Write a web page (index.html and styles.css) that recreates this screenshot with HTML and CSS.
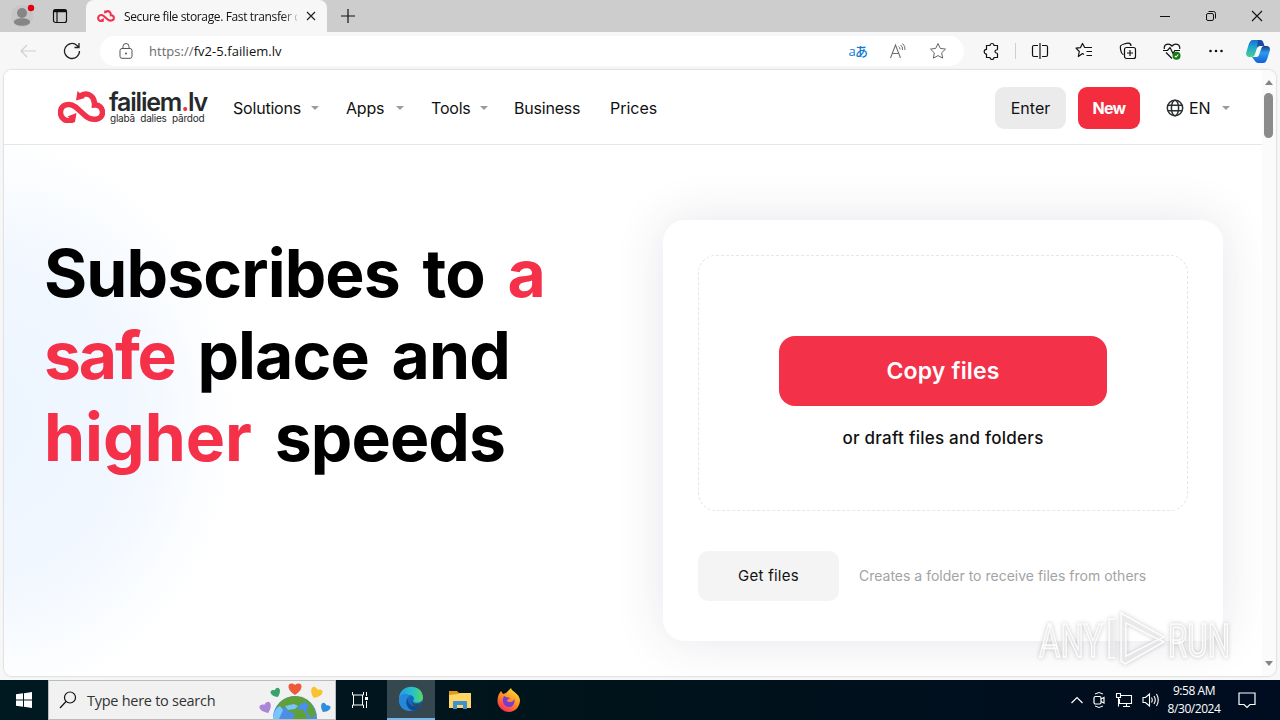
FILE: index.html
```
<!DOCTYPE html>
<html lang="en">
<head>
    <meta charset="UTF-8">
    <meta name="viewport" content="width=device-width, initial-scale=1.0">
    <title>Secure file storage. Fast transfer</title>
    <link rel="stylesheet" href="styles.css">
</head>
<body>
    <div class="tabs">
        <div class="perfil">
            <svg width="24" height="24" viewBox="0 0 24 24"><circle cx="11" cy="12" r="11" fill="#c6c6c6"/><circle cx="11" cy="9" r="5" fill="#868686"/><path d="M3 18c0-5 16-5 16 0 0 5-16 5-16 0z" fill="#868686"/><circle cx="20" cy="4" r="3.2" fill="#e0000f"/></svg>
        </div>
        <svg class="painel" width="16" height="16" viewBox="0 0 16 16"><rect x="1.500" y="1.500" width="13" height="13" rx="2" fill="none" stroke="#111" stroke-width="1.200"/><path d="M1.500 3h13" stroke="#111" stroke-width="2.500"/><path d="M5 4v10" stroke="#111" stroke-width="1.200"/></svg>
        <div class="tab">
            <svg width="18" height="12" viewBox="0 0 47 32"><use href="#nuvem"/></svg>
            <span class="tab-title">Secure file storage. Fast transfer c</span>
            <svg width="10" height="10" viewBox="0 0 10 10"><path d="M1 1l8 8M9 1l-8 8" stroke="#222" stroke-width="1.2"/></svg>
        </div>
        <svg class="mais" width="14" height="14" viewBox="0 0 14 14"><path d="M7 0v14M0 7h14" stroke="#111" stroke-width="1.2"/></svg>
        <div class="janela">
            <svg width="12" height="12" viewBox="0 0 12 12"><path d="M1 6.5h10" stroke="#111"/></svg>
            <svg width="12" height="12" viewBox="0 0 12 12"><rect x="1.5" y="3.5" width="7" height="7" rx="1.5" fill="none" stroke="#111"/><path d="M3.5 1.5h5a2 2 0 0 1 2 2v5" fill="none" stroke="#111"/></svg>
            <svg width="12" height="12" viewBox="0 0 12 12"><path d="M1 1l10 10M11 1L1 11" stroke="#111" stroke-width="1.1"/></svg>
        </div>
    </div>

    <div class="toolbar">
        <div class="icon"><svg width="18" height="18" viewBox="0 0 18 18"><path d="M17 9H2M8 3L2 9l6 6" fill="none" stroke="#cfcfcf" stroke-width="1.2"/></svg></div>
        <div class="icon"><svg width="18" height="18" viewBox="0 0 18 18"><path d="M16.5 9A7.5 7.5 0 1 1 14 3.4l2 1.8M16 1v4.5h-4.5" fill="none" stroke="#222" stroke-width="1.3"/></svg></div>
        <div class="url">
            <svg width="14" height="16" viewBox="0 0 14 16"><rect x="1" y="5.5" width="12" height="9.8" rx="2" fill="none" stroke="#555"/><path d="M4 5.500V3.500a3 3 0 0 1 6 0v2" fill="none" stroke="#555"/><circle cx="7" cy="10.500" r="1" fill="#555"/></svg>
            <span class="endereco"><i>https://</i>fv2-5.failiem.lv</span>
            <div class="mini traduzir">aあ</div>
            <div class="mini"><svg width="18" height="18" viewBox="0 0 18 18"><path d="M1.500 16L6.500 3l5 13M3.200 11.500h6.600" fill="none" stroke="#707070" stroke-width="1.100"/><path d="M9.500 4.500q1.700 1 1.500 3M11.500 3q2.500 1.500 2 5M13.500 1.500q3 2.500 2.500 6.500" fill="none" stroke="#707070"/></svg></div>
            <div class="mini"><svg width="18" height="18" viewBox="0 0 18 18"><path d="M9 1.500l2.300 4.900 5.200.7-3.800 3.700.9 5.300L9 13.600l-4.600 2.500.9-5.300L1.500 7.100l5.200-.7z" fill="none" stroke="#666" stroke-linejoin="round"/></svg></div>
        </div>
        <div class="icon"><svg width="18" height="18" viewBox="0 0 18 18"><path d="M3.500 3.500H7a2 2 0 0 1 4 0h3.500V7a1 1 0 0 1-1 1 1.500 1.500 0 0 0 0 3 1 1 0 0 1 1 1v3.500H11a2 2 0 0 1-4 0H3.500V12a2.300 2.300 0 0 1 0-4.600z" fill="none" stroke="#111" stroke-width="1.200" stroke-linejoin="round"/></svg></div>
        <div class="sep"></div>
        <div class="icon"><svg width="18" height="18" viewBox="0 0 18 18"><path d="M7 3.500H3a1.500 1.500 0 0 0-1.500 1.500v8A1.500 1.500 0 0 0 3 14.500h4M11 3.500h4A1.500 1.500 0 0 1 16.500 5v8a1.500 1.500 0 0 1-1.500 1.500h-4M9 1v16" fill="none" stroke="#111" stroke-width="1.200"/></svg></div>
        <div class="icon"><svg width="18" height="18" viewBox="0 0 18 18"><path d="M9 12.500l-1.500-.9-4.200 2.900 1-5L1 6.200l4.500-.6 2-4.100 2.200 4H17M11.500 9.500H17M11.500 13.500H17" fill="none" stroke="#111" stroke-width="1.200" stroke-linejoin="round"/></svg></div>
        <div class="icon"><svg width="18" height="18" viewBox="0 0 18 18"><path d="M4.500 12.500l-1-.5C2 11.500 1 5.500 1.500 4S8 1 9.500 1.200 12 3 12 4" fill="none" stroke="#111" stroke-width="1.200"/><rect x="5.500" y="5.500" width="11" height="11" rx="2" fill="#f7f7f7" stroke="#111" stroke-width="1.200"/><path d="M11 8v6M8 11h6" stroke="#111" stroke-width="1.200"/></svg></div>
        <div class="icon"><svg width="18" height="18" viewBox="0 0 18 18"><path d="M1.300 7C.5 2 6 .5 9 4c3-3.500 8.500-2 7.700 3M3 10.500l6 6M0 8.500h4.500L7 5.500l3 6 1.800-3H17" fill="none" stroke="#111" stroke-width="1.200"/><circle cx="13.500" cy="13.800" r="4" fill="#107c10"/><path d="M11.800 14l1.200 1 2.300-2.500" fill="none" stroke="#fff" stroke-width="1.100"/></svg></div>
        <div class="icon"><svg width="16" height="4" viewBox="0 0 16 4"><g fill="#111"><circle cx="2.500" cy="2" r="1.300"/><circle cx="8" cy="2" r="1.300"/><circle cx="13.500" cy="2" r="1.300"/></g></svg></div>
        <div class="icon copilot">
            <svg width="24" height="23" viewBox="0 0 24 23">
                <defs>
                    <linearGradient id="cp1" x1="0" y1="0" x2="0" y2="1"><stop offset="0" stop-color="#1d6fd0"/><stop offset=".45" stop-color="#20a8d0"/><stop offset="1" stop-color="#48cf8c"/></linearGradient>
                    <linearGradient id="cp2" x1="0" y1="0" x2="0" y2="1"><stop offset="0" stop-color="#183b8e"/><stop offset=".4" stop-color="#2a9ceb"/><stop offset="1" stop-color="#1460dc"/></linearGradient>
                </defs>
                <path d="M6 17l3 4c1 1.500 2 2 4 2h4c2.500 0 3.500-2 4.500-5L23.700 11c1-3-.5-5-3.200-5H18c-1.500 0-2.200 1-2.700 2.500L13 15c-.5 1.500-1.500 2-3 2z" fill="url(#cp2)"/>
                <path d="M18 6l-1.500-4C16 .5 15 0 13.500 0H7C4.500 0 3.500 2 2.500 5L.4 12c-1 3 .4 5 3 5H6c1.500 0 2.300-1 2.800-2.500L11 8c.5-1.500 1.500-2 3-2z" fill="url(#cp1)"/>
                <path d="M12 0h2c2 0 3 1 3.500 3l1 3h-4.500c-1.500 0-2.300.7-3 2z" fill="#1c4aa0"/>
            </svg>
        </div>
    </div>

    <div class="frame">
        <div class="site">
            <div class="header">
                <div class="logo">
                    <svg width="47" height="32" viewBox="0 0 47 32">
                        <g id="nuvem"><path d="M16 28.500c-8 3.500-14-1-13.500-8 .7-7 9-9 15-4.500l9 8c7 7 18 5 18-2.500 0-5-3.500-8-8-7.500C37 6 31 1.500 25 3.500l-4 2.500" fill="none" stroke="#f0324a" stroke-width="5.500"/><path d="M19.500 0l-1.500 9.500 9-2.500zM18.500 22l-1.500 9-7.500-5.500z" fill="#f0324a"/></g>
                    </svg>
                    <div class="marca">
                        <b>failiem<em>.</em>lv</b>
                        <small>glabā dalies pārdod</small>
                    </div>
                </div>
                <a class="menu solutions">Solutions<span class="caret"></span></a>
                <a class="menu apps">Apps<span class="caret"></span></a>
                <a class="menu tools">Tools<span class="caret"></span></a>
                <a class="menu business">Business</a>
                <a class="menu prices">Prices</a>
                <div class="acoes">
                    <button class="enter">Enter</button>
                    <button class="new">New</button>
                    <div class="lang">
                        <svg width="18" height="18" viewBox="0 0 18 18"><g fill="none" stroke="#2b3030" stroke-width="1.500"><circle cx="9" cy="9" r="7.700"/><ellipse cx="9" cy="9" rx="3.600" ry="7.700"/><path d="M2 6.300h14M2 11.700h14"/></g></svg>
                        <span>EN</span>
                        <span class="caret"></span>
                    </div>
                </div>
            </div>

            <div class="hero">
                <h1>Subscribes to <em class="safe">a<br>safe</em> place and<br><em class="higher">higher</em> speeds</h1>
                <div class="card">
                    <div class="drop">
                        <button class="copy">Copy files</button>
                        <p>or draft files and folders</p>
                    </div>
                    <div class="receber">
                        <button class="get">Get files</button>
                        <span>Creates a folder to receive files from others</span>
                    </div>
                </div>
            </div>
        </div>
        <div class="scroll">
            <span class="up"></span>
            <span class="thumb"></span>
            <span class="down"></span>
        </div>
    </div>

    <div class="taskbar">
        <div class="start"><svg width="16" height="16" viewBox="0 0 16 16"><path d="M0 2.300L7 1.300v6.200H0zM8 1.200L16 0v7.500H8zM0 8.500h7v6.200l-7-1zM8 8.500h8V16l-8-1.200z" fill="#fff"/></svg></div>
        <div class="busca">
            <svg width="18" height="18" viewBox="0 0 18 18"><circle cx="11" cy="6.500" r="5.500" fill="none" stroke="#111" stroke-width="1.200"/><path d="M7 10.500L1 17" stroke="#111" stroke-width="1.200"/></svg>
            <span>Type here to search</span>
            <svg class="globo" width="72" height="38" viewBox="0 0 72 38">
                <defs><path id="cor" d="M0 6C-11-1-6-9 0-4 6-9 11-1 0 6z"/></defs>
                <circle cx="36" cy="37" r="22" fill="#4b8fe8"/>
                <path d="M18 25q6-9 17-10l8 1 4 5-6 2-3 5 6 1 4 6v3H34l2-5-7-3-3-4-8 3zM42 15.500q13 5 15 18.500l-5 3-5-7 3-5z" fill="#5fa03a"/>
                <path d="M14 36q2-9 7-11l3 4-4 9h-6zM26 25l9-2 4 2-3 3-7 1z" fill="#79c4f8"/>
                <use href="#cor" x="36" y="8" fill="#f0583a"/>
                <use href="#cor" transform="translate(17 12) rotate(-25) scale(.75)" fill="#37a36a"/>
                <use href="#cor" transform="translate(57 12) rotate(25) scale(.9)" fill="#f9c22e"/>
                <use href="#cor" transform="translate(7 27) rotate(-25) scale(.9)" fill="#aa86d8"/>
                <use href="#cor" transform="translate(66 27) rotate(28) scale(.75)" fill="#2f8de0"/>
            </svg>
        </div>
        <div class="app"><svg width="18" height="18" viewBox="0 0 18 18"><path d="M1.500 1v3h11V1M1.500 17v-3h11v3M2.500 4v10M11.500 4v10M15.500 1v4M15.500 10v7" fill="none" stroke="#fff"/><path d="M14 6h3v3h-3z" fill="#fff"/></svg></div>
        <div class="app ativo">
            <svg width="26" height="26" viewBox="0 0 26 26">
                <defs><linearGradient id="ed1"><stop offset="0" stop-color="#249ce5"/><stop offset=".6" stop-color="#29c3c5"/><stop offset="1" stop-color="#5bd862"/></linearGradient></defs>
                <circle cx="13" cy="13" r="12" fill="#1667bd"/>
                <path d="M1 13C1-3 25-3 25 12c0 5-9 6-10 3 2-2 1-6-4-6-6 0-10 3-10 6z" fill="url(#ed1)"/>
                <path d="M1 13c1-5 8-7 11-3-6 2-5 11 2 15C5 26 0 19 1 13z" fill="#2589db"/>
                <path d="M10 13c-1 6 6 9 13 6-3 6-10 7-13 2-2-3-2-6 0-8z" fill="#104a91"/>
                <path d="M14.500 13c-1 3 0 5 3.500 5s5-1 6-2l1 1-2 2c-6 3-11-1-8.500-6z" fill="#35474f"/>
            </svg>
        </div>
        <div class="app"><svg width="22" height="20" viewBox="0 0 22 20"><path d="M0 1h8l2 2h11v3H0z" fill="#e39a1b"/><path d="M0 5l9-1 2-1h11v15H0z" fill="#ffd666"/><path d="M4 19v-7q0-1 1-1h12q1 0 1 1v7h-4v-4H8v4z" fill="#3d92d3"/></svg></div>
        <div class="app">
            <svg width="24" height="24" viewBox="0 0 24 24">
                <defs><linearGradient id="ff" x1=".8" y1="0" x2=".2" y2="1"><stop offset="0" stop-color="#ffe13b"/><stop offset=".5" stop-color="#ff8b22"/><stop offset="1" stop-color="#f5215f"/></linearGradient></defs>
                <path d="M2 6l2-3 2 3 3-1 5-5c0 3 8 5 9 12 0 7-5 12-11 12S.5 19 .5 13c0-3 .5-5 1.500-7z" fill="url(#ff)"/>
                <path d="M7 8c3 2 4 1 6 2l-3 2c-1 2 6 4 7-1 1 0 1 8-5 8-5 0-8-6-5-11z" fill="#7a3bd5"/>
            </svg>
        </div>
        <div class="tray">
            <svg width="12" height="8" viewBox="0 0 12 8"><path d="M.5 7L6 1.500 11.500 7" fill="none" stroke="#fff" stroke-width="1.200"/></svg>
            <svg width="14" height="18" viewBox="0 0 14 18"><path d="M3 3q4-3 8 0M3 15q4 3 8 0" fill="none" stroke="#fff"/><rect x="2" y="5.500" width="7" height="7.500" rx="1.500" fill="none" stroke="#fff" stroke-width="1.200"/><path d="M9 8l3-1.500v5.500l-3-1.500" fill="none" stroke="#fff" stroke-width="1.200"/></svg>
            <svg width="18" height="16" viewBox="0 0 18 16"><path d="M5.500 3.500h11v8h-12V7M8 14.500h7M11.500 11.500v3M1.500 1.500h4v4h-4zM3.500 5.500v9" fill="none" stroke="#fff" stroke-width="1.100"/></svg>
            <svg width="18" height="16" viewBox="0 0 18 16"><path d="M1 5.500h2.500L7.500 2v12l-4-3.500H1zM9.500 5.500q1.500 2.500 0 5M12 4q2.500 4 0 8M14.500 2q3.500 6 0 12" fill="none" stroke="#fff" stroke-width="1.100"/></svg>
        </div>
        <div class="relogio"><span class="hora">9:58 AM</span><span class="data">8/30/2024</span></div>
        <svg class="aviso" width="18" height="18" viewBox="0 0 18 18"><path d="M1 2h16v11.500h-5L9 16.500l-3-3H1z" fill="none" stroke="#fff" stroke-width="1.200"/></svg>
    </div>

    <svg class="anyrun" width="220" height="72" viewBox="0 0 220 72">
        <g class="traco">
            <text x="5" y="51" textLength="64" lengthAdjust="spacingAndGlyphs">ANY</text>
            <path d="M81 13h-6v39h6M87 7l43 24-5 3-33-17v33l33-17 5 3-39 22-4-3z"/>
            <text x="134" y="51" textLength="62" lengthAdjust="spacingAndGlyphs">RUN</text>
        </g>
    </svg>
</body>
</html>
```
FILE: styles.css
```
*{
    margin: 0;
    padding: 0;
    box-sizing: border-box;
}

body{
    width: 1280px;
    height: 720px;
    overflow: hidden;
    position: relative;
    background-color: #f7f7f7;
    font-family: "Open Sans", "Noto Sans CJK JP", sans-serif;
    color: #111;
}

svg{
    display: block;
    flex-shrink: 0;
}

em, i{
    font-style: normal;
}

button{
    border: none;
    font-family: Inter, sans-serif;
}

/* tabs */
.tabs{
    height: 32px;
    background-color: #cdcdcd;
    display: flex;
    align-items: center;
}

.perfil{
    margin-left: 11px;
    width: 24px;
}

.painel{
    margin: 0 18px 0 17px;
}

.tab{
    width: 241px;
    height: 32px;
    background-color: #f7f7f7;
    border-radius: 8px 8px 0 0;
    display: flex;
    align-items: center;
    padding-left: 11px;
}

.tab-title{
    width: 173px;
    margin: 0 9px 0 9px;
    font-size: 12px;
    letter-spacing: -0.37px;
    white-space: nowrap;
    overflow: hidden;
    -webkit-mask-image: linear-gradient(to right, #000 158px, transparent 177px);
}

.mais{
    margin-left: 14px;
}

.janela{
    margin-left: auto;
    margin-right: 17px;
    display: flex;
    gap: 34px;
}

/* toolbar */
.toolbar{
    height: 38px;
    display: flex;
    align-items: center;
    padding-left: 6px;
}

.icon{
    width: 44px;
    display: flex;
    justify-content: center;
}

.copilot{
    width: 40px;
}

.sep{
    width: 1px;
    height: 16px;
    margin: 0 2px 0 1px;
    background-color: #cfcfcf;
}

.url{
    width: 864px;
    height: 30px;
    margin: 0 6px;
    padding: 0 6px 0 19px;
    border-radius: 15px;
    background-color: #fff;
    display: flex;
    align-items: center;
}

.endereco{
    flex: 1;
    margin-left: 16px;
    font-size: 13px;
    letter-spacing: 0.04px;
}

.endereco i{
    color: #6b6b6b;
}

.mini{
    width: 40px;
    display: flex;
    justify-content: center;
}

.traduzir{
    color: #0b78d4;
    font-size: 13px;
    line-height: 16px;
    letter-spacing: -0.5px;
    font-weight: 500;
}

/* page */
.frame{
    height: 606px;
    margin: 0 4px;
    display: flex;
    background-color: #fff;
    border-radius: 8px;
    overflow: hidden;
    box-shadow: 0 0 2px rgba(0,0,0,0.3);
}

.site{
    width: 1258px;
    font-family: Inter, sans-serif;
    background: radial-gradient(ellipse 250px 285px at -15px 350px, #ecf5ff 0%, #f1f7ff 55%, #fff 100%);
}

.header{
    height: 75px;
    border-bottom: 1px solid #e6e6e6;
    background-color: #fff;
    display: flex;
    align-items: center;
    padding-left: 54px;
}

.logo{
    width: 175px;
    display: flex;
    align-items: center;
}

.marca{
    margin-left: 4px;
    margin-top: -2px;
    color: #26292c;
    display: flex;
    flex-direction: column;
}

.marca b{
    font-size: 25px;
    line-height: 24px;
    font-weight: 600;
    letter-spacing: -1.2px;
}

.marca b em{
    color: #f0324a;
}

.marca small{
    font-size: 10px;
    line-height: 9px;
    letter-spacing: -0.25px;
    word-spacing: 3px;
    padding-left: 1px;
}

.menu{
    font-size: 16px;
    letter-spacing: -0.2px;
    padding-top: 1px;
    display: flex;
    align-items: center;
    justify-content: space-between;
}

.prices{
    letter-spacing: 0;
}

.caret{
    border-left: 4px solid transparent;
    border-right: 4px solid transparent;
    border-top: 4px solid #9b9b9b;
}

.solutions{
    width: 86px;
    margin-right: 27px;
}

.apps{
    width: 58px;
    margin-right: 27px;
}

.tools{
    width: 57px;
    margin-right: 26px;
}

.business{
    width: 96px;
}

.acoes{
    margin-left: auto;
    margin-right: 33px;
    padding-top: 1px;
    display: flex;
    align-items: center;
}

.enter, .new{
    height: 42px;
    border-radius: 9px;
    font-size: 16px;
}

.enter{
    width: 71px;
    background-color: #ebebeb;
    color: #111;
}

.new{
    width: 62px;
    margin-left: 12px;
    background-color: #f32c3e;
    color: #fff;
    font-weight: 700;
    letter-spacing: -0.7px;
}

.lang{
    width: 64px;
    margin-left: 26px;
    margin-right: -1px;
    display: flex;
    align-items: center;
    font-size: 16px;
}

.lang span{
    margin-left: 5px;
}

.lang .caret{
    margin-left: auto;
}

.hero{
    display: flex;
    padding-left: 40px;
}

h1{
    width: 619px;
    padding-top: 87px;
    font-size: 66px;
    line-height: 82px;
    font-weight: 700;
    letter-spacing: -0.9px;
    word-spacing: 8px;
    color: #000;
    white-space: nowrap;
}

h1 em{
    color: #f43149;
}

.safe{
    letter-spacing: -2.2px;
}

.higher{
    letter-spacing: 0;
}

.card{
    width: 560px;
    height: 421px;
    margin-top: 75px;
    padding: 35px;
    border-radius: 22px;
    background-color: #fff;
    box-shadow: 0 0 50px rgba(40,50,80,0.12);
}

.drop{
    height: 256px;
    border: 1px dashed #e6e6e6;
    border-radius: 18px;
    padding-top: 80px;
    text-align: center;
}

.copy{
    width: 328px;
    height: 70px;
    border-radius: 16px;
    background-color: #f33148;
    color: #fff;
    font-size: 23px;
    font-weight: 600;
    letter-spacing: 0.15px;
}

.drop p{
    margin-top: 21px;
    font-size: 17px;
    line-height: 22px;
    font-weight: 500;
    letter-spacing: 0.25px;
}

.receber{
    margin-top: 40px;
    display: flex;
    align-items: center;
}

.get{
    width: 141px;
    height: 50px;
    padding-bottom: 1px;
    border-radius: 10px;
    background-color: #f4f4f4;
    color: #111;
    font-size: 15px;
    letter-spacing: 0.25px;
}

.receber span{
    margin-left: 20px;
    padding-bottom: 2px;
    font-size: 14px;
    color: #a3a3a3;
    white-space: nowrap;
}

.scroll{
    width: 14px;
    padding: 10px 1px 10px 0;
    background-color: #fbfbfb;
    display: flex;
    flex-direction: column;
    align-items: center;
}

.up, .down{
    border-left: 4px solid transparent;
    border-right: 4px solid transparent;
}

.up{
    border-bottom: 5px solid #858585;
}

.down{
    margin-top: auto;
    border-top: 5px solid #858585;
}

.thumb{
    width: 9px;
    height: 45px;
    margin-top: 8px;
    border-radius: 5px;
    background-color: #8b8b8b;
}

/* taskbar */
.taskbar{
    height: 40px;
    margin-top: 4px;
    background: linear-gradient(to right, #001820, #00131b 50%, #000c20);
    display: flex;
    align-items: center;
}

.start{
    width: 48px;
    display: flex;
    justify-content: center;
}

.busca{
    width: 288px;
    height: 40px;
    border: 1px solid #b9bcbd;
    background-color: #f1f1f1;
    display: flex;
    align-items: center;
    padding-left: 10px;
}

.busca span{
    width: 172px;
    margin-left: 10px;
    font-size: 14.5px;
    letter-spacing: -0.27px;
    color: #333;
    white-space: nowrap;
}

.globo{
    align-self: flex-end;
}

.app{
    width: 48px;
    height: 40px;
    margin-right: 1px;
    display: flex;
    align-items: center;
    justify-content: center;
}

.ativo{
    background-color: #35474f;
    border-bottom: 2px solid #76b9ed;
    margin-left: 2px;
}

.tray{
    margin-left: auto;
    display: flex;
    align-items: center;
    gap: 9px;
}

.relogio{
    width: 68px;
    color: #fff;
    font-size: 12px;
    line-height: 18px;
    display: flex;
    flex-direction: column;
    align-items: center;
    letter-spacing: -0.45px;
}

.aviso{
    margin: 0 24px 0 10px;
}

/* watermark over the page */
.anyrun{
    position: absolute;
    left: 1034px;
    top: 606px;
}

.traco{
    fill: rgba(245,245,247,0.6);
    stroke: rgba(255,255,255,0.9);
    stroke-width: 1.5;
    font-family: Roboto, sans-serif;
    font-size: 46px;
    filter: drop-shadow(0 0 2px rgba(0,0,0,0.25));
}
```
